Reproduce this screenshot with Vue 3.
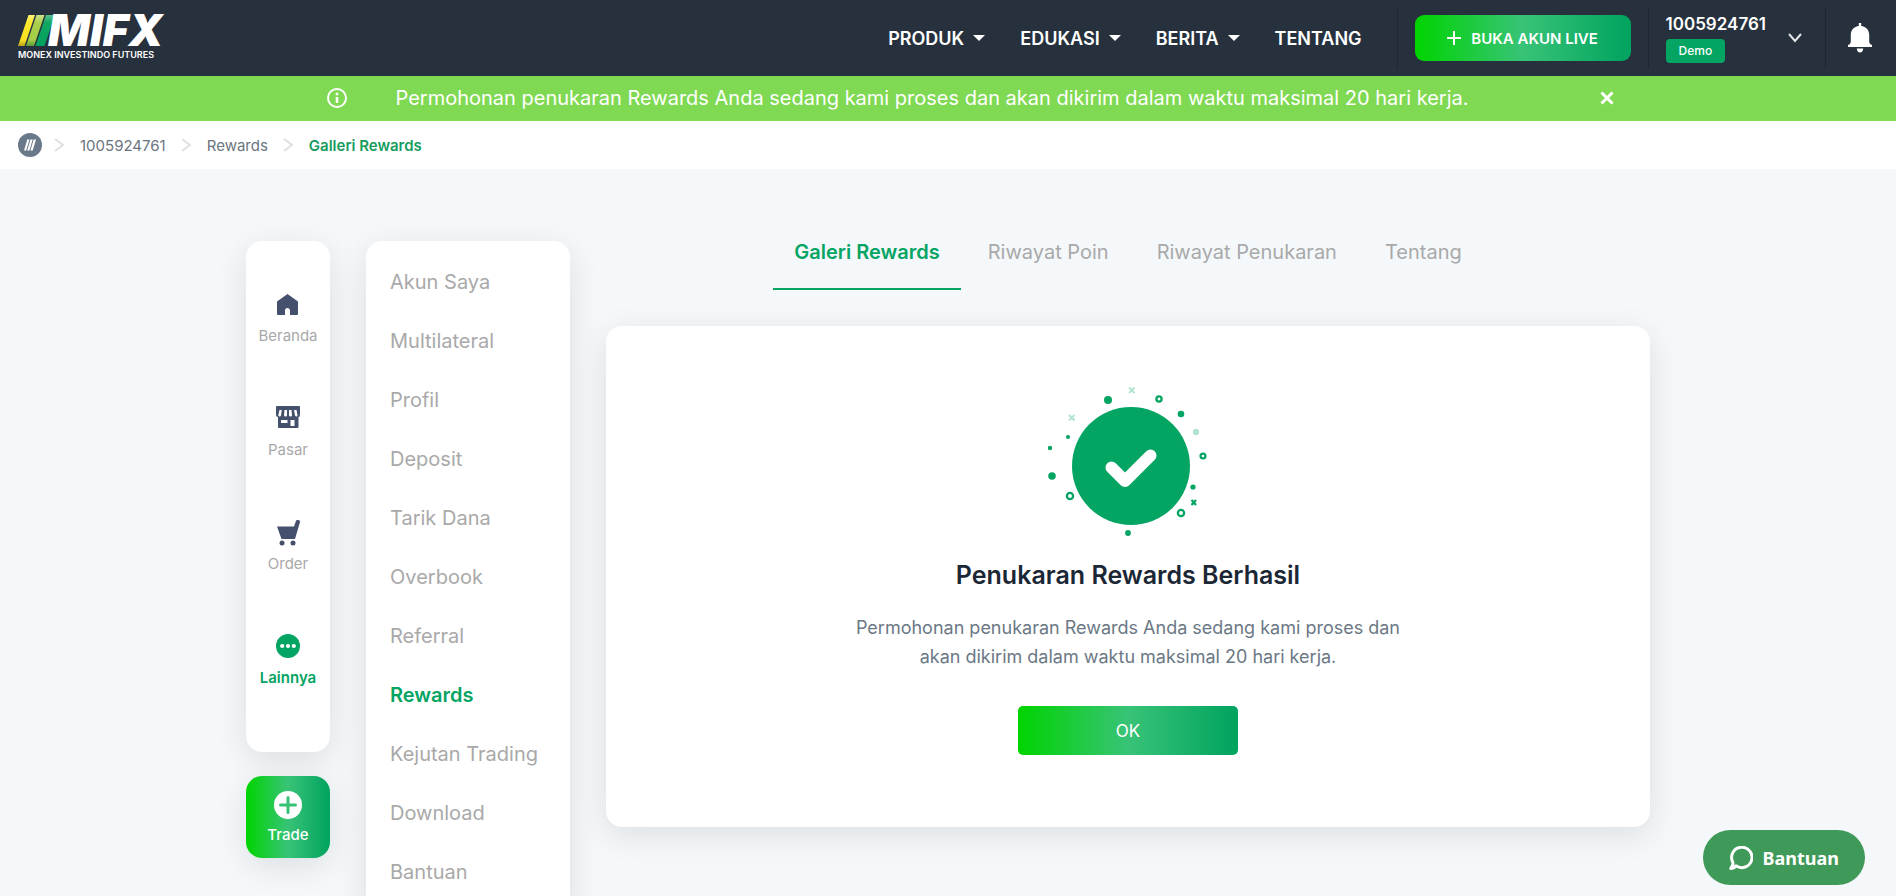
<script setup>
import { ref } from 'vue'

const message = 'Permohonan penukaran Rewards Anda sedang kami proses dan akan dikirim dalam waktu maksimal 20 hari kerja.'

const navLinks = [
  { label: 'PRODUK', dropdown: true },
  { label: 'EDUKASI', dropdown: true },
  { label: 'BERITA', dropdown: true },
  { label: 'TENTANG', dropdown: false },
]

const crumbs = ['1005924761', 'Rewards', 'Galleri Rewards']

const shortcuts = [
  { id: 'home', label: 'Beranda' },
  { id: 'market', label: 'Pasar' },
  { id: 'order', label: 'Order' },
  { id: 'more', label: 'Lainnya' },
]

const menuItems = [
  'Akun Saya',
  'Multilateral',
  'Profil',
  'Deposit',
  'Tarik Dana',
  'Overbook',
  'Referral',
  'Rewards',
  'Kejutan Trading',
  'Download',
  'Bantuan',
]

const tabs = ['Galeri Rewards', 'Riwayat Poin', 'Riwayat Penukaran', 'Tentang']

const showBanner = ref(true)
const activeShortcut = ref('more')
const activeMenu = ref('Rewards')
const activeTab = ref('Galeri Rewards')
</script>

<template>
  <div class="page">
    <header class="header">
      <a href="#" class="logo" aria-label="MIFX">
        <span class="logo-mark">
          <svg width="37" height="31" viewBox="0 0 37 31">
            <defs>
              <linearGradient id="stripeYellow" x1="0" y1="0" x2="0" y2="1">
                <stop offset="0" stop-color="#fff27a" />
                <stop offset="0.25" stop-color="#ffe92a" />
                <stop offset="0.8" stop-color="#fbe122" />
                <stop offset="1" stop-color="#b9a11d" />
              </linearGradient>
              <linearGradient id="stripeLime" x1="0" y1="0" x2="0" y2="1">
                <stop offset="0" stop-color="#cfe28a" />
                <stop offset="0.25" stop-color="#a9cf4a" />
                <stop offset="0.8" stop-color="#a5cd48" />
                <stop offset="1" stop-color="#5c9a3c" />
              </linearGradient>
              <linearGradient id="stripeGreen" x1="0" y1="0" x2="0" y2="1">
                <stop offset="0" stop-color="#5cbf8c" />
                <stop offset="0.25" stop-color="#10a660" />
                <stop offset="1" stop-color="#00a25f" />
              </linearGradient>
            </defs>
            <path d="M10.500 0h6.500L6.500 31H0z" fill="url(#stripeYellow)" />
            <path d="M18.500 0h8L16 31H8z" fill="url(#stripeLime)" />
            <path d="M28 0h9L26.500 31H17.500z" fill="url(#stripeGreen)" />
          </svg>
          <span class="logo-name">MIFX</span>
        </span>
        <span class="logo-tag">MONEX INVESTINDO FUTURES</span>
      </a>

      <nav class="nav">
        <a v-for="link in navLinks" :key="link.label" href="#" class="nav-link">
          {{ link.label }}
          <svg v-if="link.dropdown" width="12" height="6" viewBox="0 0 12 6">
            <path d="M0 0h12L6 6z" fill="#fff" />
          </svg>
        </a>
      </nav>

      <div class="live">
        <button type="button" class="live-button">
          <svg width="14" height="14" viewBox="0 0 14 14">
            <path d="M7 0v14M0 7h14" stroke="#fff" stroke-width="2" />
          </svg>
          BUKA AKUN LIVE
        </button>
      </div>

      <button type="button" class="account">
        <span class="account-info">
          <span class="account-number">1005924761</span>
          <span class="badge">Demo</span>
        </span>
        <svg width="14" height="10" viewBox="0 0 14 10">
          <path d="M1 1l6 7 6-7" fill="none" stroke="#e4e6e8" stroke-width="2" />
        </svg>
      </button>

      <button type="button" class="bell" aria-label="Notifikasi">
        <svg width="24" height="30" viewBox="0 0 24 30">
          <path d="M10.800 0h2.400v3c4.600.6 8 4 8 9v6.500c0 1 .4 2 1.200 2.700L24 22v2H0v-2l1.600-.8c.8-.7 1.200-1.700 1.200-2.700V12c0-5 3.400-8.400 8-9z" fill="#fff" />
          <path d="M8.800 25.500h6.400c0 2.200-1.200 4-3.200 4s-3.200-1.800-3.200-4z" fill="#fff" />
        </svg>
      </button>
    </header>

    <div v-if="showBanner" class="banner" role="status">
      <svg width="20" height="20" viewBox="0 0 20 20">
        <circle cx="10" cy="10" r="9" fill="none" stroke="#fff" stroke-width="2" />
        <circle cx="10" cy="6" r="1.500" fill="#fff" />
        <path d="M10 9v6" stroke="#fff" stroke-width="2.600" />
      </svg>
      <p class="banner-text">{{ message }}</p>
      <button type="button" class="banner-close" aria-label="Tutup" @click="showBanner = false">
        <svg width="14" height="14" viewBox="0 0 14 14">
          <path d="M1.500 1.500l11 11M12.500 1.500l-11 11" stroke="#fff" stroke-width="3" />
        </svg>
      </button>
    </div>

    <nav class="breadcrumb" aria-label="Breadcrumb">
      <a href="#" class="crumb-home" aria-label="MIFX">
        <svg width="24" height="24" viewBox="0 0 24 24">
          <circle cx="12" cy="12" r="12" fill="#697989" />
          <path d="M9.300 6.500h2.200L8.200 17.500H6zM12.500 6.500h2.200L11.400 17.500H9.200zM15.700 6.500H18l-3.300 11h-2.300z" fill="#fff" />
        </svg>
      </a>
      <template v-for="(crumb, i) in crumbs" :key="crumb">
        <svg class="crumb-arrow" width="10" height="14" viewBox="0 0 10 14">
          <path d="M1 1l8 6-8 6" fill="none" stroke="#dfdfdf" stroke-width="2" />
        </svg>
        <a href="#" class="crumb" :class="{ active: i === crumbs.length - 1 }">{{ crumb }}</a>
      </template>
    </nav>

    <main class="content">
      <div class="side">
        <nav class="shortcuts">
          <a
            v-for="item in shortcuts"
            :key="item.id"
            href="#"
            class="shortcut"
            :class="{ active: item.id === activeShortcut }"
            @click.prevent="activeShortcut = item.id"
          >
            <svg v-if="item.id === 'home'" width="24" height="24" viewBox="0 0 24 24">
              <path d="M11.500 2L22 9.500V22q0 1-1 1h-7v-4.500a2.500 2.500 0 0 0-5 0V23H2q-1 0-1-1V9.500z" fill="#45516c" />
            </svg>
            <svg v-else-if="item.id === 'market'" width="24" height="24" viewBox="0 0 24 24">
              <path d="M1 0h22q1 0 1 1v8q0 2-1.500 2V21q0 1-1 1H3q-1 0-1-1V11Q0 11 0 9V1q0-1 1-1z" fill="#45516c" />
              <path d="M3.500 4h2.300L5 9.500q-.3 1-1.500 1T2.300 9zM8.500 4H11v5.500q0 1-1.500 1t-1.500-1zM13 4h2.500l.5 5.500q0 1-1.500 1t-1.500-1zM18 4h2.500l1 5q0 1.500-1 1.500t-1.500-1zM5 14h6.500v3H5zM14.500 14h4v6h-4z" fill="#fff" />
            </svg>
            <svg v-else-if="item.id === 'order'" width="24" height="26" viewBox="0 0 24 26">
              <path d="M1 6.500h17L20 .8q.7-1.200 2.500-.7T24 2l-5 17H5.500z" fill="#45516c" />
              <circle cx="6" cy="23" r="2.500" fill="#45516c" />
              <circle cx="17" cy="23" r="2.500" fill="#45516c" />
            </svg>
            <svg v-else width="24" height="24" viewBox="0 0 24 24">
              <circle cx="12" cy="12" r="12" fill="#04a463" />
              <circle cx="6.200" cy="12" r="2.100" fill="#fff" />
              <circle cx="12" cy="12" r="2.100" fill="#fff" />
              <circle cx="17.800" cy="12" r="2.100" fill="#fff" />
            </svg>
            <span>{{ item.label }}</span>
          </a>
        </nav>
        <button type="button" class="trade">
          <svg width="28" height="28" viewBox="0 0 28 28">
            <circle cx="14" cy="14" r="14" fill="#fff" />
            <path d="M14 6.500v15M6.500 14h15" stroke="#34c274" stroke-width="3" stroke-linecap="round" />
          </svg>
          Trade
        </button>
      </div>

      <nav class="menu">
        <a
          v-for="item in menuItems"
          :key="item"
          href="#"
          class="menu-item"
          :class="{ active: item === activeMenu }"
          @click.prevent="activeMenu = item"
        >{{ item }}</a>
      </nav>

      <section class="main">
        <div class="tabs" role="tablist">
          <button
            v-for="tab in tabs"
            :key="tab"
            type="button"
            role="tab"
            class="tab"
            :class="{ active: tab === activeTab }"
            :aria-selected="tab === activeTab"
            @click="activeTab = tab"
          >{{ tab }}</button>
        </div>

        <div class="card">
          <svg width="200" height="160" viewBox="-2 10 200 160">
            <circle cx="101" cy="96" r="59" fill="#04a463" />
            <path d="M81.500 97.500L95 111l25.500-25.500" fill="none" stroke="#fff" stroke-width="12" stroke-linecap="round" stroke-linejoin="round" />
            <g fill="#04a463">
              <circle cx="78" cy="30" r="4" />
              <circle cx="151" cy="44" r="3.300" />
              <circle cx="38" cy="67" r="2" />
              <circle cx="20" cy="78" r="2.200" />
              <circle cx="22" cy="106" r="3.800" />
              <circle cx="163" cy="117" r="2.600" />
              <circle cx="98" cy="163" r="2.900" />
            </g>
            <circle cx="166" cy="62" r="3.200" fill="#b3e4cf" />
            <g fill="none" stroke="#04a463" stroke-width="2.300">
              <circle cx="129" cy="29" r="2.600" />
              <circle cx="173" cy="86" r="2.400" />
              <circle cx="40" cy="126" r="3.100" />
              <circle cx="151" cy="143" r="3.100" />
              <path d="M161.500 130l4.500 5M166 130l-4.500 5" />
            </g>
            <path d="M99 17.500l5.500 5.500M104.500 17.500L99 23M39 45l5.500 5.500M44.500 45L39 50.500" stroke="#b3e4cf" stroke-width="2" />
          </svg>
          <h1 class="card-title">Penukaran Rewards Berhasil</h1>
          <p class="card-text">{{ message }}</p>
          <button type="button" class="ok">OK</button>
        </div>
      </section>
    </main>

    <button type="button" class="help">
      <svg width="24" height="24" viewBox="0 0 24 24">
        <path d="M7 19.800a10.200 10.200 0 1 0-3.500-4.200q.8 1.700.3 3.200L1.800 22.500q3.200.2 5.200-2.700z" fill="none" stroke="#fff" stroke-width="3" stroke-linejoin="round" />
      </svg>
      Bantuan
    </button>
  </div>
</template>

<style>
body {
  margin: 0;
  background: #f4f8fb;
}
</style>

<style scoped>
.page {
  height: 100vh;
  overflow: hidden;
  font-family: Inter, "Liberation Sans", sans-serif;
  color: #a9a9a9;
}
a {
  color: inherit;
  text-decoration: none;
}
button {
  padding: 0;
  border: 0;
  background: none;
  font: inherit;
  color: inherit;
  cursor: pointer;
}
svg {
  display: block;
  flex: none;
}

.header {
  display: flex;
  align-items: center;
  height: 76px;
  background: #27313e;
  color: #fff;
}
.logo {
  display: flex;
  flex-direction: column;
  gap: 3px;
  margin: 0 auto 0 18px;
}
.logo-mark {
  display: flex;
}
.logo-name {
  margin-left: -7px;
  font-size: 44px;
  line-height: 31px;
  font-weight: 900;
  font-style: italic;
}
.logo-tag {
  font-size: 9px;
  line-height: 12px;
  font-weight: 600;
}
.nav {
  display: flex;
  gap: 35px;
  margin-right: 35px;
}
.nav-link {
  display: flex;
  align-items: center;
  gap: 9px;
  font-size: 18px;
  font-weight: 600;
}
.live,
.account,
.bell {
  display: flex;
  align-items: center;
  height: 62px;
  border-left: 1px solid #1f2732;
}
.live {
  padding: 0 17px;
}
.live-button {
  display: flex;
  align-items: center;
  justify-content: center;
  gap: 10px;
  width: 216px;
  height: 46px;
  border-radius: 9px;
  background: linear-gradient(90deg, #00d400, #38c377 50%, #00a35f);
  font-size: 15px;
  font-weight: 600;
}
.account {
  gap: 22px;
  padding: 0 23px 0 17px;
}
.account-info {
  display: flex;
  flex-direction: column;
  align-items: flex-start;
  gap: 4px;
}
.account-number {
  font-size: 17px;
  line-height: 22px;
  font-weight: 600;
}
.badge {
  padding: 0 13px;
  border-radius: 4px;
  background: #04a463;
  font-size: 12px;
  line-height: 24px;
  font-weight: 500;
}
.bell {
  padding: 0 24px 0 22px;
}

.banner {
  display: flex;
  align-items: center;
  justify-content: center;
  box-sizing: border-box;
  height: 45px;
  padding: 0 0 2px 45px;
  background: #7fd952;
  color: #fff;
}
.banner-text {
  margin: 0 131px 0 48px;
  font-size: 20px;
}

.breadcrumb {
  display: flex;
  align-items: center;
  height: 48px;
  padding-left: 18px;
  background: #fff;
  font-size: 15px;
  color: #6b7580;
}
.crumb-arrow {
  margin: 0 16px 0 15px;
}
.crumb-home + .crumb-arrow {
  margin-left: 12px;
}
.crumb.active {
  font-weight: 600;
  color: #169c5d;
}

.content {
  display: grid;
  grid-template-columns: 84px 204px 1fr;
  gap: 36px;
  max-width: 1404px;
  margin: 0 auto;
  padding-top: 72px;
}
.side {
  display: flex;
  flex-direction: column;
  gap: 24px;
}
.shortcuts,
.trade,
.menu,
.card {
  border-radius: 16px;
  background: #fff;
  box-shadow: 0 8px 32px rgba(0, 0, 0, 0.1);
}
.shortcuts {
  display: flex;
  flex-direction: column;
  gap: 61px;
  padding: 51px 0 65px;
}
.shortcut {
  display: flex;
  flex-direction: column;
  align-items: center;
  justify-content: space-between;
  height: 53px;
  font-size: 15px;
  line-height: 18px;
}
.shortcut.active {
  font-weight: 600;
  color: #04a463;
}
.trade {
  display: flex;
  flex-direction: column;
  align-items: center;
  gap: 7px;
  padding: 15px 0 14px;
  background: linear-gradient(90deg, #00d400, #38c377 50%, #00a35f);
  font-size: 15px;
  line-height: 18px;
  font-weight: 500;
  color: #fff;
}
.menu {
  display: flex;
  flex-direction: column;
  padding: 12px 0 24px;
}
.menu-item {
  padding-left: 24px;
  font-size: 20px;
  line-height: 59px;
}
.menu-item.active {
  font-weight: 600;
  color: #04a463;
}

.tabs {
  display: flex;
  justify-content: center;
  gap: 6px;
}
.tab {
  height: 49px;
  padding: 0 21px 24px;
  border-bottom: 2px solid transparent;
  font-size: 20px;
  line-height: 23px;
}
.tab.active {
  border-color: #04a463;
  font-weight: 600;
  color: #04a463;
}
.card {
  display: flex;
  flex-direction: column;
  align-items: center;
  margin-top: 36px;
  padding: 54px 24px 72px;
}
.card-title {
  margin: 19px 0 0;
  font-size: 25px;
  line-height: 32px;
  font-weight: 600;
  color: #1c2735;
}
.card-text {
  max-width: 560px;
  margin: 22px 0 35px;
  font-size: 18px;
  line-height: 29px;
  text-align: center;
  color: #6b7885;
}
.ok {
  width: 220px;
  height: 49px;
  border-radius: 5px;
  background: linear-gradient(90deg, #00d400, #38c377 50%, #00a35f);
  font-size: 17px;
  color: #fff;
}

.help {
  position: fixed;
  right: 31px;
  bottom: 11px;
  display: flex;
  align-items: center;
  gap: 10px;
  height: 55px;
  padding: 0 26px;
  border-radius: 28px;
  background: #3f9958;
  font-family: "Noto Sans", sans-serif;
  font-size: 18px;
  font-weight: 700;
  color: #fff;
}
</style>
